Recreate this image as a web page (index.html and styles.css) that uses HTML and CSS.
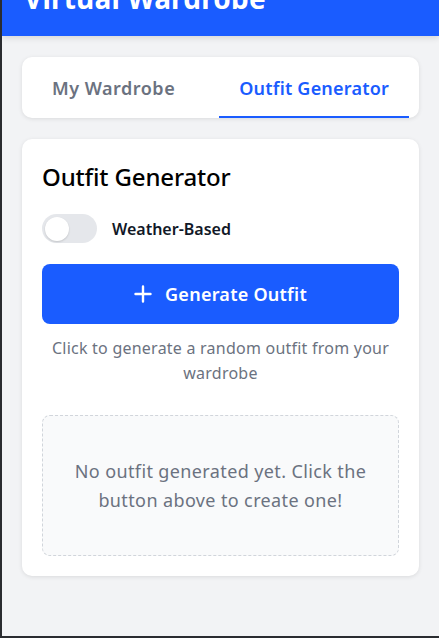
FILE: index.html
```html
<!DOCTYPE html>
<html lang="en">
<head>
<meta charset="utf-8">
<title>Virtual Wardrobe</title>
<link rel="stylesheet" href="styles.css">
</head>
<body>
<div class="frame">
  <header class="app-header">
    <h1 class="app-title">Virtual Wardrobe</h1>
  </header>
  <main class="content">
    <nav class="tabs">
      <button class="tab">My Wardrobe</button>
      <button class="tab tab-active">Outfit Generator</button>
    </nav>
    <section class="card">
      <h2 class="card-title">Outfit Generator</h2>
      <div class="toggle-row">
        <span class="toggle"><span class="knob"></span></span>
        <span class="toggle-label">Weather-Based</span>
      </div>
      <button class="generate-btn">
        <svg class="plus" width="18" height="18" viewBox="0 0 18 18" aria-hidden="true">
          <path d="M9 1.5v15M1.5 9h15" stroke="#fff" stroke-width="2.4" stroke-linecap="round" fill="none"/>
        </svg>
        <span>Generate Outfit</span>
      </button>
      <p class="hint">Click to generate a random outfit from your wardrobe</p>
      <div class="empty">
        <p class="empty-text">No outfit generated yet. Click the button above to create one!</p>
      </div>
    </section>
  </main>
</div>
</body>
</html>
```

FILE: styles.css
```css
* { box-sizing: border-box; }
html, body {
  margin: 0;
  padding: 0;
  height: 100%;
}
body {
  background: #2a2c30;
  font-family: "Noto Sans", "Open Sans", sans-serif;
}
.frame {
  margin-left: 2px;
  height: 636px;
  background: #f2f3f5;
  overflow: hidden;
}
.app-header {
  background: #1a5cff;
  margin-top: -30px;
  height: 66px;
  padding: 10px 22px;
  box-shadow: 0 2px 6px rgba(0,0,0,0.12);
  position: relative;
}
.app-title {
  margin: 0;
  color: #fff;
  font-size: 28px;
  font-weight: 700;
  line-height: 36px;
  letter-spacing: 0.2px;
}
.content {
  padding: 21px 20px 0;
  display: flex;
  flex-direction: column;
  gap: 21px;
}
.tabs {
  background: #fff;
  border-radius: 10px;
  box-shadow: 0 1px 4px rgba(0,0,0,0.1);
  display: flex;
  justify-content: space-between;
  padding: 0 10px;
  height: 61px;
}
.tab {
  border: 0;
  background: none;
  font-family: inherit;
  font-size: 18px;
  font-weight: 600;
  letter-spacing: 0.5px;
  color: #6b7280;
  padding: 0 20px;
  border-bottom: 2px solid transparent;
  padding-top: 2px;
}
.tab-active {
  color: #1a5cff;
  border-bottom-color: #1a5cff;
  letter-spacing: 0.2px;
}
.card {
  background: #fff;
  border-radius: 10px;
  box-shadow: 0 1px 4px rgba(0,0,0,0.1);
  padding: 20px;
}
.card-title {
  margin: 0;
  font-size: 24px;
  font-weight: 500;
  color: #000;
  line-height: 36px;
  letter-spacing: -0.15px;
}
.toggle-row {
  display: flex;
  align-items: center;
  gap: 15px;
  margin-top: 19px;
}
.toggle {
  width: 55px;
  height: 29px;
  border-radius: 15px;
  background: #e5e7eb;
  display: flex;
  align-items: center;
  padding-left: 3px;
}
.knob {
  width: 24px;
  height: 24px;
  border-radius: 50%;
  background: #fff;
  box-shadow: 0 1px 2px rgba(0,0,0,0.15);
}
.toggle-label {
  font-size: 16px;
  font-weight: 600;
  color: #111827;
}
.generate-btn {
  margin-top: 21px;
  width: 100%;
  height: 60px;
  border: 0;
  border-radius: 8px;
  background: #1a5cff;
  color: #fff;
  font-family: inherit;
  font-size: 18px;
  font-weight: 600;
  letter-spacing: 0.25px;
  display: flex;
  align-items: center;
  justify-content: center;
  gap: 13px;
}
.hint {
  margin: 12px 0 0;
  text-align: center;
  color: #6b7280;
  font-size: 16px;
  line-height: 25px;
  letter-spacing: 0.23px;
}
.empty {
  margin-top: 29px;
  height: 141px;
  border: 1px dashed #d1d5db;
  border-radius: 8px;
  background: #f9fafb;
  display: flex;
  align-items: center;
  justify-content: center;
  padding: 0 20px;
}
.empty-text {
  margin: 0;
  text-align: center;
  color: #6b7280;
  font-size: 18px;
  line-height: 29px;
  letter-spacing: 0.38px;
}
```
